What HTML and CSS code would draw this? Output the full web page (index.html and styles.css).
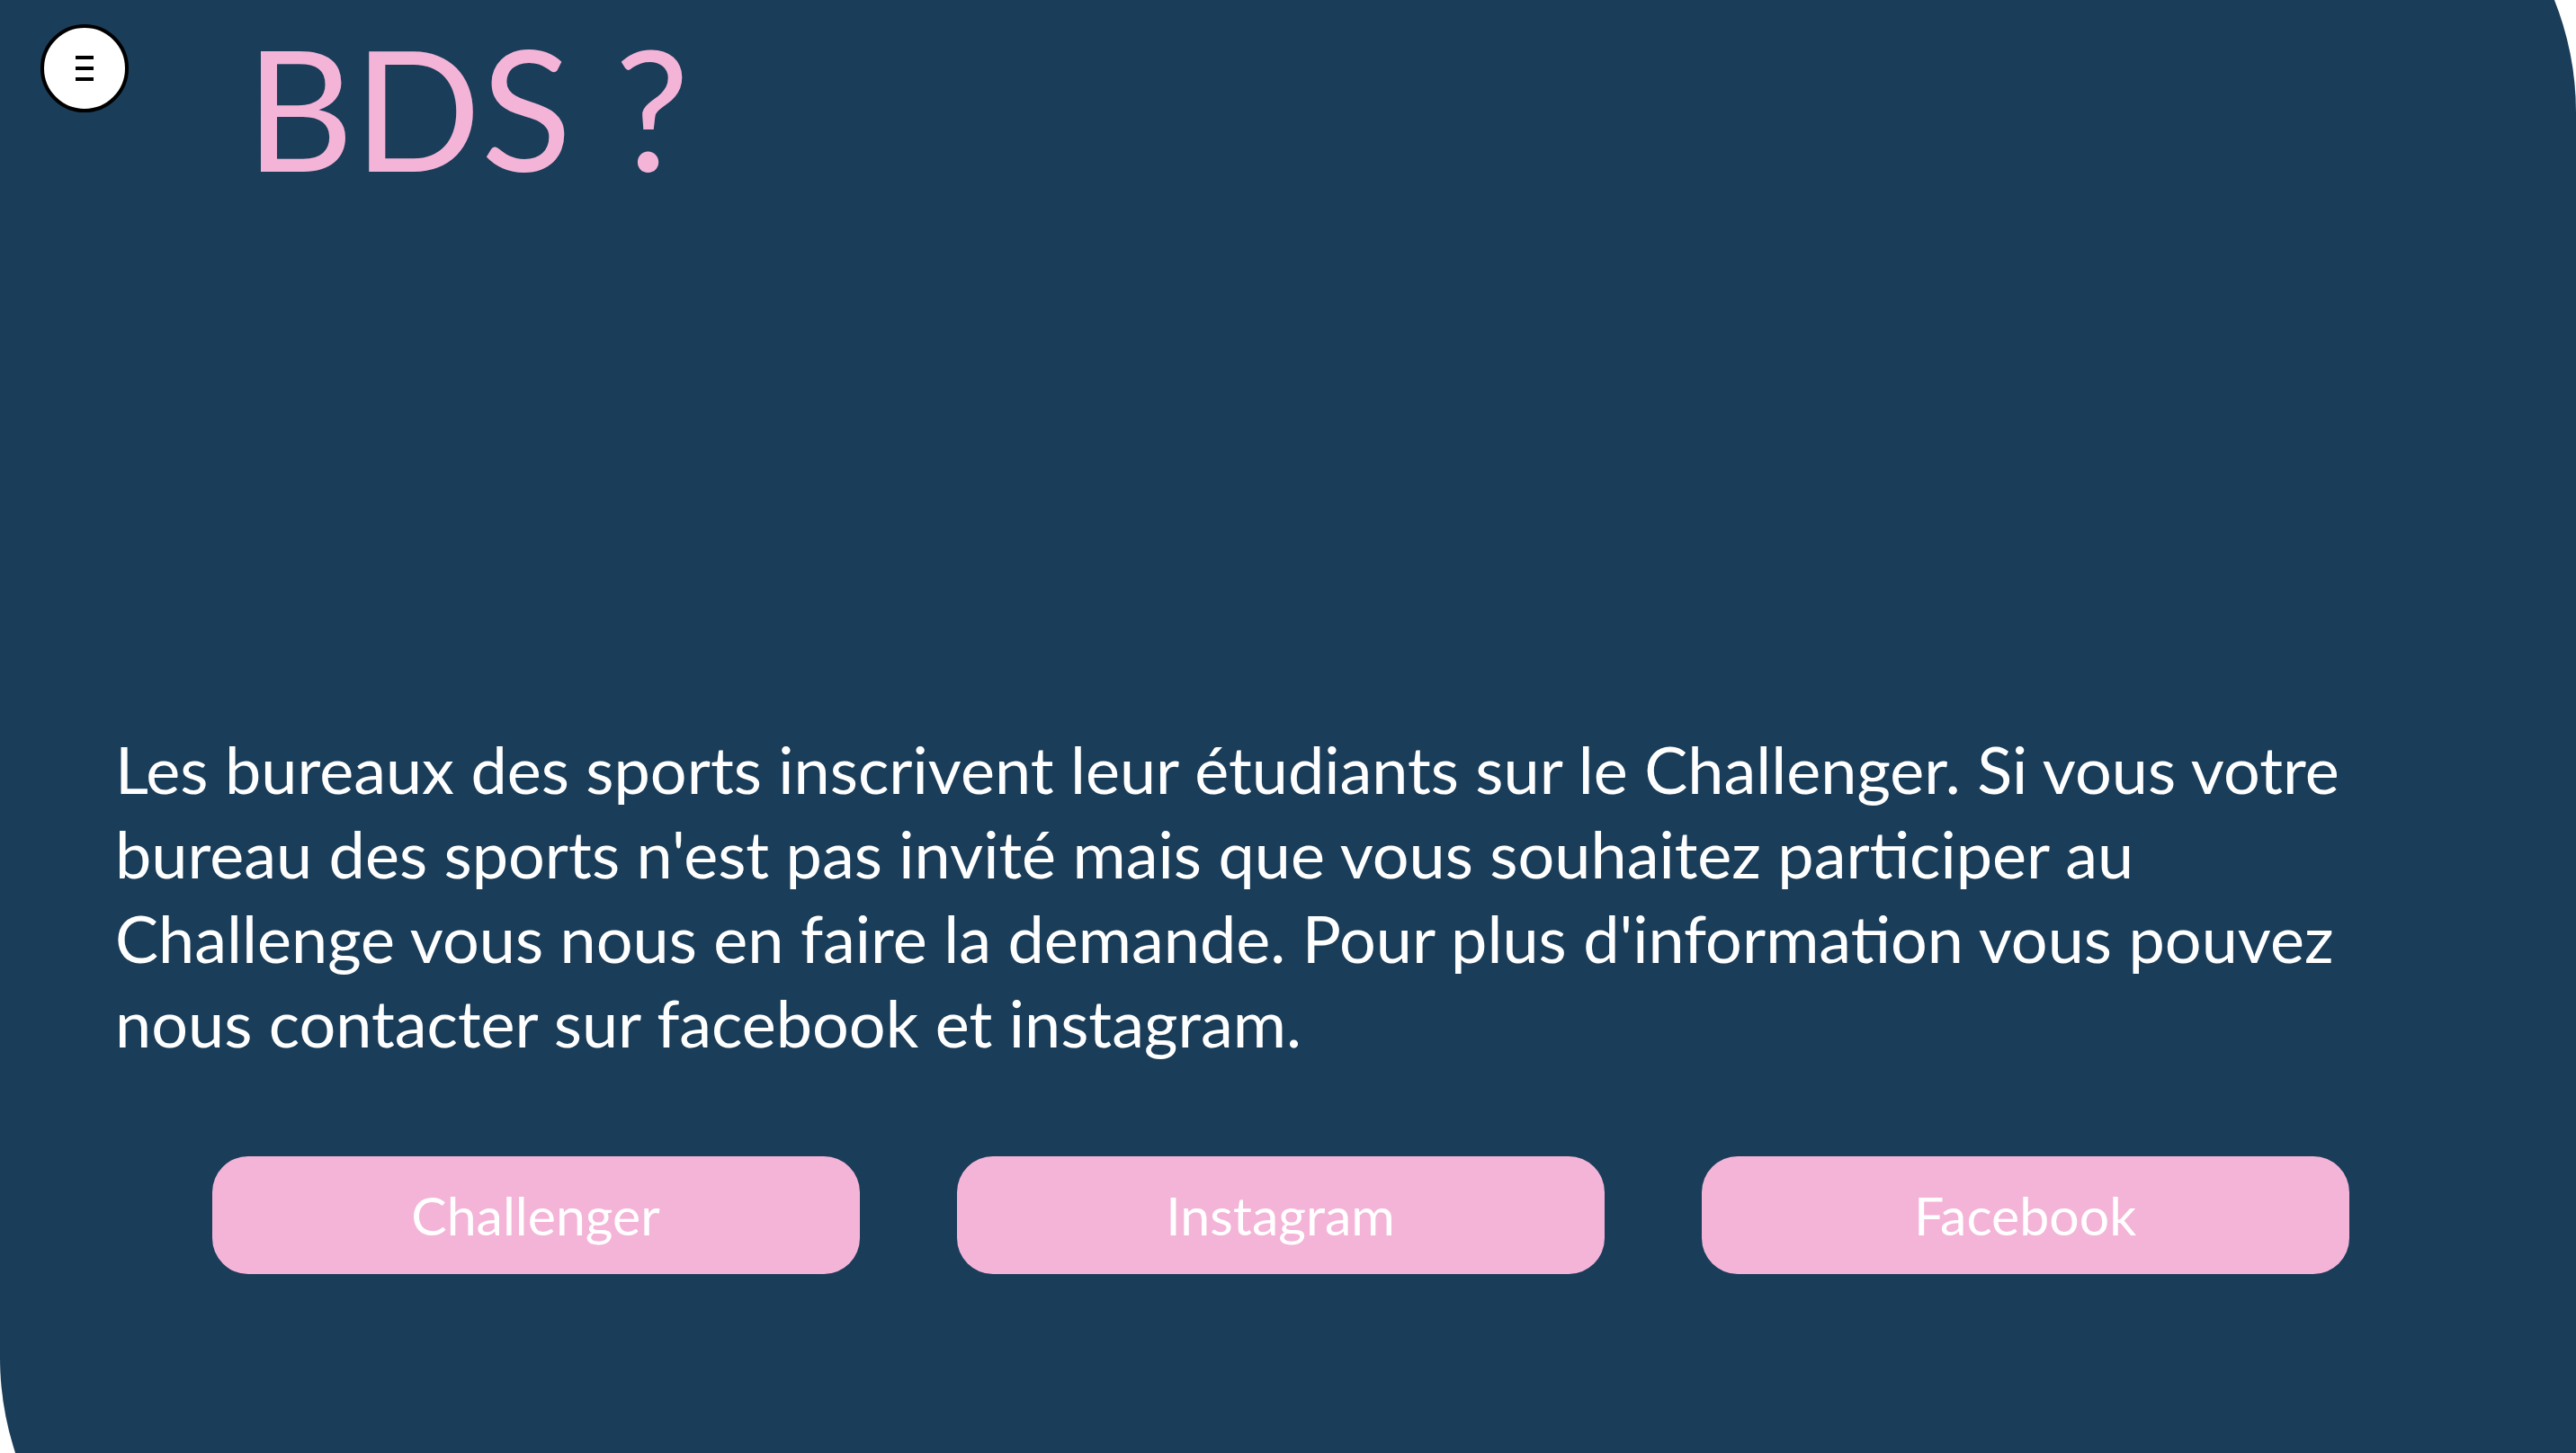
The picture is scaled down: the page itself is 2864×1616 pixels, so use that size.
FILE: index.html
```html
<!DOCTYPE html>
<html lang="fr">
<head>
<meta charset="utf-8">
<title>BDS ?</title>
<link rel="stylesheet" href="styles.css">
</head>
<body>
<button class="menu-btn" aria-label="Menu">
  <span class="menu-bar"></span>
  <span class="menu-bar"></span>
  <span class="menu-bar"></span>
</button>
<main class="panel">
  <h1 class="title">BDS ?</h1>
  <p class="intro">Les bureaux des sports inscrivent leur étudiants sur le Challenger. Si vous votre bureau des sports n'est pas invité mais que vous souhaitez participer au Challenge vous nous en faire la demande. Pour plus d'information vous pouvez nous contacter sur facebook et instagram.</p>
  <div class="links">
    <a class="link-btn" href="#">Challenger</a>
    <a class="link-btn" href="#">Instagram</a>
    <a class="link-btn" href="#">Facebook</a>
  </div>
</main>
</body>
</html>
```
FILE: styles.css
```css
html, body {
  margin: 0;
  padding: 0;
  height: 100%;
  overflow: hidden;
  background: #ffffff;
}

body {
  font-family: Lato, "Open Sans", sans-serif;
}

.menu-btn {
  position: fixed;
  top: 27px;
  left: 45px;
  width: 98px;
  height: 98px;
  box-sizing: border-box;
  border: 4px solid #000;
  border-radius: 50%;
  background: #fff;
  padding: 0;
  display: flex;
  flex-direction: column;
  align-items: center;
  justify-content: center;
  gap: 8px;
  z-index: 10;
}

.menu-bar {
  display: block;
  width: 20px;
  height: 4px;
  background: #000;
}

.panel {
  margin-top: -212px;
  height: 2059px;
  box-sizing: border-box;
  background: #1a3d59;
  border-radius: 0 337px 0 337px;
  padding: 238px 142px 0 125px;
  display: flex;
  flex-direction: column;
}

.title {
  margin: 0 0 0 148px;
  font-weight: 400;
  font-size: 186px;
  line-height: 1;
  color: #f4b4d7;
}

.intro {
  margin: 596px 40px 0 3px;
  font-size: 72px;
  line-height: 94px;
  color: #ffffff;
}

.links {
  margin-top: 102px;
  display: flex;
  justify-content: center;
  gap: 108px;
}

.link-btn {
  width: 720px;
  height: 131px;
  border-radius: 40px;
  background: #f4b4d7;
  color: #ffffff;
  text-decoration: none;
  font-size: 59px;
  display: flex;
  align-items: center;
  justify-content: center;
}
```
